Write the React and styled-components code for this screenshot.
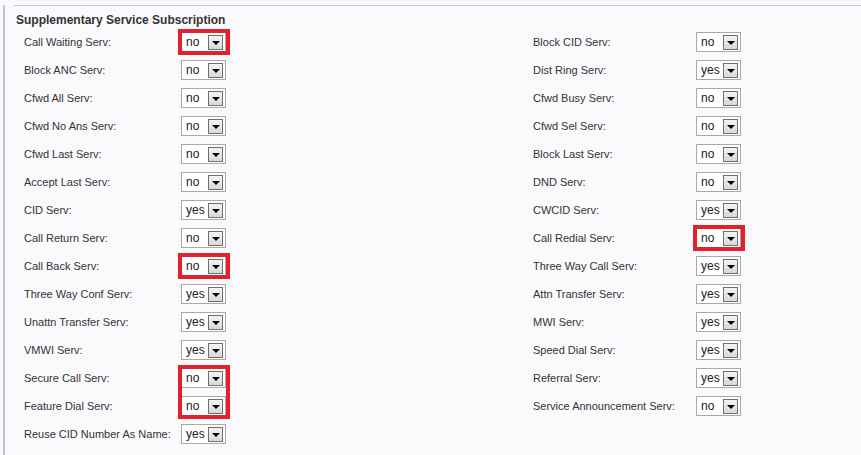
import React from 'react'
import styled, { createGlobalStyle, css } from 'styled-components'

const GlobalStyle = createGlobalStyle`
  html, body {
    margin: 0;
    padding: 0;
    background: #fafafd;
  }
  body {
    font-family: "Liberation Sans", Arial, sans-serif;
    color: #333;
  }
`

const Page = styled.div`
  width: 861px;
  height: 455px;
  overflow: hidden;
  padding-left: 3px;
  box-sizing: border-box;
`

const Panel = styled.div`
  height: 451px;
  border-left: 2px solid #b9c2d6;
  padding-left: 9px;
`

const Frame = styled.div`
  margin-top: 5px;
  border-top: 1px solid #cbc6e6;
  padding-left: 2px;
`

const Title = styled.div`
  font-size: 12px;
  font-weight: bold;
  color: #333;
  height: 22px;
  line-height: 28px;
  white-space: nowrap;
`

const Columns = styled.div`
  display: flex;
  padding-left: 8px;
`

const Column = styled.div`
  width: ${p => p.$width}px;
  display: flex;
  flex-direction: column;
`

const Row = styled.div`
  display: flex;
  align-items: center;
  height: 28px;
`

const Label = styled.span`
  width: ${p => p.$width}px;
  font-size: 11px;
  color: #333;
  white-space: nowrap;
`

const highlight = {
  single: css`top: -4px; bottom: -4px;`,
  top: css`top: -4px; bottom: -5px; border-bottom: none;`,
  bottom: css`top: -5px; bottom: -4px; border-top: none;`,
}

const SelectBox = styled.div`
  position: relative;
  width: 45px;
  height: 20px;
  box-sizing: border-box;
  border: 1px solid #a9a9a9;
  background: #fff;
  display: flex;
  align-items: center;
  justify-content: space-between;
  padding: 0 2px 0 4px;
  font-size: 12px;
  color: #222;

  ${p => p.$mark && css`
    &::after {
      content: '';
      position: absolute;
      left: -4px;
      right: -5px;
      border: 4px solid #e3202b;
      pointer-events: none;
      ${highlight[p.$mark]}
    }
  `}
`

const Arrow = styled.span`
  width: 15px;
  height: 15px;
  box-sizing: border-box;
  border: 1px solid #6f6f6f;
  background: linear-gradient(#f4f4f4, #d9d9d9);
  display: flex;
  align-items: center;
  justify-content: center;
  padding-top: 2px;

  &::before {
    content: '';
    border-left: 4px solid transparent;
    border-right: 4px solid transparent;
    border-top: 4px solid #000;
  }
`

const left = [
  ['Call Waiting Serv:', 'no', 'single'],
  ['Block ANC Serv:', 'no'],
  ['Cfwd All Serv:', 'no'],
  ['Cfwd No Ans Serv:', 'no'],
  ['Cfwd Last Serv:', 'no'],
  ['Accept Last Serv:', 'no'],
  ['CID Serv:', 'yes'],
  ['Call Return Serv:', 'no'],
  ['Call Back Serv:', 'no', 'single'],
  ['Three Way Conf Serv:', 'yes'],
  ['Unattn Transfer Serv:', 'yes'],
  ['VMWI Serv:', 'yes'],
  ['Secure Call Serv:', 'no', 'top'],
  ['Feature Dial Serv:', 'no', 'bottom'],
  ['Reuse CID Number As Name:', 'yes'],
]

const right = [
  ['Block CID Serv:', 'no'],
  ['Dist Ring Serv:', 'yes'],
  ['Cfwd Busy Serv:', 'no'],
  ['Cfwd Sel Serv:', 'no'],
  ['Block Last Serv:', 'no'],
  ['DND Serv:', 'no'],
  ['CWCID Serv:', 'yes'],
  ['Call Redial Serv:', 'no', 'single'],
  ['Three Way Call Serv:', 'yes'],
  ['Attn Transfer Serv:', 'yes'],
  ['MWI Serv:', 'yes'],
  ['Speed Dial Serv:', 'yes'],
  ['Referral Serv:', 'yes'],
  ['Service Announcement Serv:', 'no'],
]

function Field({ label, value, mark, labelWidth }) {
  return (
    <Row>
      <Label $width={labelWidth}>{label}</Label>
      <SelectBox $mark={mark}>
        <span>{value}</span>
        <Arrow />
      </SelectBox>
    </Row>
  )
}

export default function App() {
  return (
    <Page>
      <GlobalStyle />
      <Panel>
        <Frame>
          <Title>Supplementary Service Subscription</Title>
          <Columns>
            <Column $width={509}>
              {left.map(([label, value, mark]) => (
                <Field key={label} label={label} value={value} mark={mark} labelWidth={157} />
              ))}
            </Column>
            <Column $width={260}>
              {right.map(([label, value, mark]) => (
                <Field key={label} label={label} value={value} mark={mark} labelWidth={163} />
              ))}
            </Column>
          </Columns>
        </Frame>
      </Panel>
    </Page>
  )
}
